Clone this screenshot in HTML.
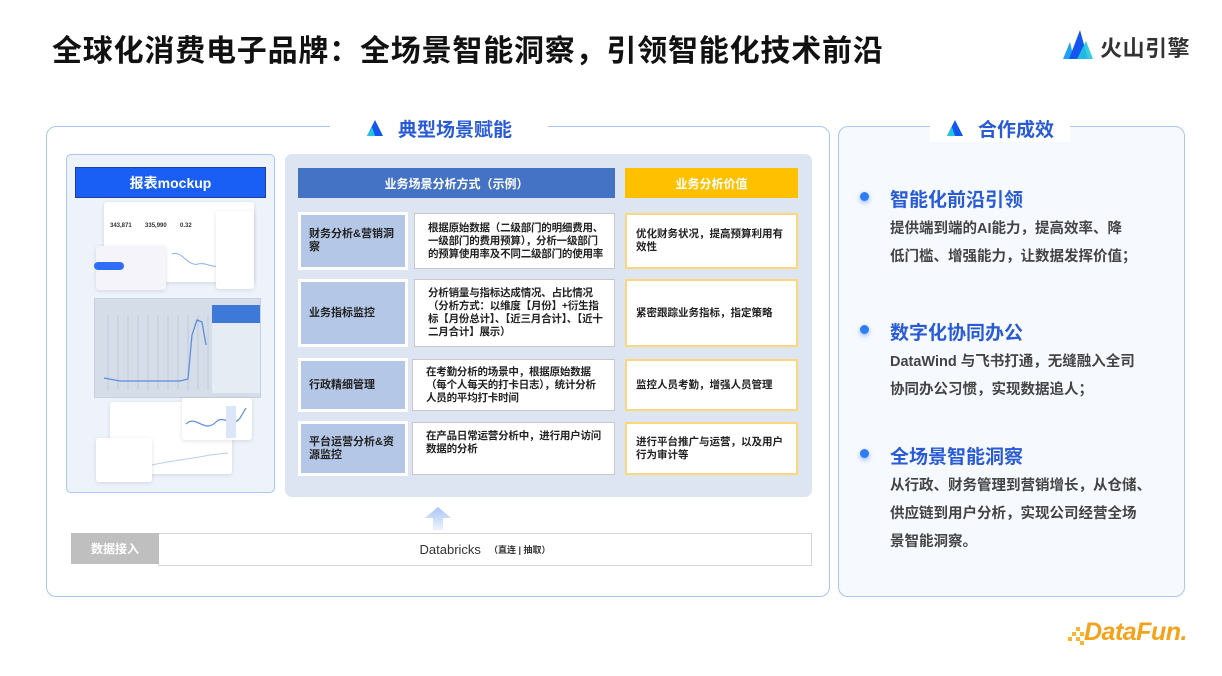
<!DOCTYPE html>
<html><head><meta charset="utf-8"><style>
*{margin:0;padding:0;box-sizing:border-box}
body{width:1222px;height:676px;background:#fff;position:relative;overflow:hidden;font-family:"Liberation Sans","Noto Sans CJK SC",sans-serif}
.a{position:absolute}
.title{left:52px;top:26px;font-size:30px;font-weight:bold;color:#111;letter-spacing:0.8px;white-space:nowrap}
.panel{border:1.5px solid #a9c6ee;border-radius:10px}
.hdr{background:#fff;font-size:19px;font-weight:bold;color:#2a5bd7;display:flex;align-items:center;justify-content:center;gap:14px}
.cell{font-size:10.5px;font-weight:bold;color:#222;line-height:13px;display:flex;align-items:center;padding:0 10px}
.lab{background:#b4c7e7;border:3px solid #fff;left:298px;width:110px;padding:0 8px;font-size:11px}
.desc{background:#fff;border:1px solid #c8c8c8;left:414px;width:201px;padding:0 8px 0 13px;letter-spacing:-0.2px}
.val{background:#fff;border:2px solid #fdd77a;left:625px;width:173px;padding:0 8px 0 9px}
.h3{font-size:19px;font-weight:bold;color:#2a5bd7;left:890px}
.p{font-size:14.5px;color:#444;left:890px;line-height:28px;font-weight:bold}
.dot{width:9px;height:9px;border-radius:50%;background:#2e7cf6;box-shadow:0 2px 5px rgba(46,124,246,.5);left:860px}
.card{background:#fff;border-radius:3px;box-shadow:0 1px 4px rgba(0,0,0,.12)}
</style></head><body>
<div class="a title">全球化消费电子品牌：全场景智能洞察，引领智能化技术前沿</div>
<svg class="a" style="left:1063px;top:28px" width="32" height="32" viewBox="0 0 32 32"><polygon points="0,31 7,14 11,31" fill="#1fa3f5"/><polygon points="6,31 17,2 25,31" fill="#1456f0"/><polygon points="14,31 23,13 30,31" fill="#21c7e0" opacity=".9"/></svg>
<div class="a" style="left:1100px;top:31px;font-size:22px;font-weight:bold;color:#333;letter-spacing:0.5px">火山引擎</div>

<div class="a panel" style="left:46px;top:126px;width:784px;height:471px"></div>
<div class="a hdr" style="left:330px;top:114px;width:218px;height:28px"><svg width="18" height="18" viewBox="0 0 18 18"><polygon points="9,1 17,17 1,17" fill="#1456f0"/><polygon points="1,17 6,8 9,17" fill="#21c7e0"/></svg>典型场景赋能</div>

<div class="a panel" style="left:838px;top:126px;width:347px;height:471px;background:#f6f9fe"></div>
<div class="a hdr" style="left:930px;top:114px;width:140px;height:28px"><svg width="18" height="18" viewBox="0 0 18 18"><polygon points="9,1 17,17 1,17" fill="#1456f0"/><polygon points="1,17 6,8 9,17" fill="#21c7e0"/></svg>合作成效</div>

<!-- mockup -->
<div class="a" style="left:66px;top:154px;width:209px;height:339px;background:#eef3fb;border:1.5px solid #a9c6ee;border-radius:5px"></div>
<div class="a" style="left:75px;top:167px;width:191px;height:31px;background:#1a5ff5;border:1.5px solid #1a3f9e;color:#fff;font-size:14px;font-weight:bold;display:flex;align-items:center;justify-content:center">报表mockup</div>
<div class="a card" style="left:104px;top:202px;width:150px;height:80px"></div>
<div class="a" style="left:110px;top:223px;font-size:6px;color:#333;font-weight:bold">343,871 &nbsp;&nbsp;&nbsp;&nbsp;&nbsp;&nbsp; 335,990 &nbsp;&nbsp;&nbsp;&nbsp;&nbsp;&nbsp; 0.32</div>
<svg class="a" style="left:170px;top:242px" width="50" height="30"><path d="M2,12 C12,8 18,25 28,22 C36,20 42,26 48,24" fill="none" stroke="#8fb0e8" stroke-width="1"/></svg>
<div class="a card" style="left:96px;top:246px;width:70px;height:44px;background:#f5f4fb"></div>
<div class="a" style="left:94px;top:262px;width:30px;height:8px;border-radius:4px;background:#2f6df6"></div>
<div class="a card" style="left:216px;top:211px;width:38px;height:78px"></div>
<div class="a" style="left:94px;top:298px;width:167px;height:100px;background:#d5dde9;border:1px solid #c5d1e2"></div>
<svg class="a" style="left:100px;top:305px" width="160" height="90"><g stroke="#c2ccd9" stroke-width="1">
<line x1="8" y1="10" x2="8" y2="85"/><line x1="18" y1="10" x2="18" y2="85"/><line x1="28" y1="10" x2="28" y2="85"/><line x1="38" y1="10" x2="38" y2="85"/><line x1="48" y1="10" x2="48" y2="85"/><line x1="58" y1="10" x2="58" y2="85"/><line x1="68" y1="10" x2="68" y2="85"/><line x1="78" y1="10" x2="78" y2="85"/><line x1="88" y1="10" x2="88" y2="85"/><line x1="98" y1="10" x2="98" y2="85"/><line x1="108" y1="10" x2="108" y2="85"/></g>
<polyline points="4,73 20,76 50,76 80,76 88,74 92,30 97,15 102,17 106,40" fill="none" stroke="#5b8de0" stroke-width="1.3"/>
<rect x="112" y="0" width="48" height="18" fill="#3e78d9"/><rect x="112" y="18" width="48" height="70" fill="#e6ecf4"/></svg>
<div class="a card" style="left:110px;top:402px;width:122px;height:72px"></div>
<div class="a card" style="left:182px;top:398px;width:70px;height:42px"></div>
<svg class="a" style="left:184px;top:404px" width="66" height="34"><path d="M2,20 C12,10 20,30 32,18 C40,10 48,25 56,14 L62,4" fill="none" stroke="#5b8de0" stroke-width="1.2"/><rect x="42" y="2" width="10" height="32" fill="#dbe6fb"/></svg>
<svg class="a" style="left:150px;top:445px" width="80" height="25"><path d="M2,20 C20,16 40,14 60,10 L78,8" fill="none" stroke="#b9cdf0" stroke-width="1"/></svg>
<div class="a card" style="left:96px;top:438px;width:56px;height:44px"></div>

<!-- center -->
<div class="a" style="left:285px;top:154px;width:527px;height:343px;background:#dee5f2;border-radius:7px"></div>
<div class="a" style="left:298px;top:168px;width:317px;height:30px;background:#4472c4;color:#fff;font-size:12px;font-weight:bold;display:flex;align-items:center;justify-content:center">业务场景分析方式（示例）</div>
<div class="a" style="left:625px;top:168px;width:173px;height:30px;background:#ffc000;color:#fff;font-size:12px;font-weight:bold;display:flex;align-items:center;justify-content:center">业务分析价值</div>

<div class="a cell lab" style="top:212px;height:58px">财务分析&amp;营销洞察</div>
<div class="a cell desc" style="top:213px;height:56px">根据原始数据（二级部门的明细费用、一级部门的费用预算），分析一级部门的预算使用率及不同二级部门的使用率</div>
<div class="a cell val" style="top:213px;height:56px">优化财务状况，提高预算利用有效性</div>

<div class="a cell lab" style="top:279px;height:68px">业务指标监控</div>
<div class="a cell desc" style="top:279px;height:68px">分析销量与指标达成情况、占比情况（分析方式：以维度【月份】+衍生指标【月份总计】、【近三月合计】、【近十二月合计】展示）</div>
<div class="a cell val" style="top:279px;height:68px">紧密跟踪业务指标，指定策略</div>

<div class="a cell lab" style="top:358px;height:54px">行政精细管理</div>
<div class="a cell desc" style="top:359px;height:52px;left:412px;width:203px">在考勤分析的场景中，根据原始数据（每个人每天的打卡日志），统计分析人员的平均打卡时间</div>
<div class="a cell val" style="top:359px;height:52px">监控人员考勤，增强人员管理</div>

<div class="a cell lab" style="top:421px;height:55px">平台运营分析&amp;资源监控</div>
<div class="a cell desc" style="top:422px;height:53px;left:412px;width:203px;align-items:flex-start;padding-top:7px">在产品日常运营分析中，进行用户访问数据的分析</div>
<div class="a cell val" style="top:422px;height:53px">进行平台推广与运营，以及用户行为审计等</div>

<svg class="a" style="left:424px;top:506px" width="28" height="24"><defs><linearGradient id="g" x1="0" y1="0" x2="0" y2="1"><stop offset="0" stop-color="#a9c4f5"/><stop offset="1" stop-color="#eef3fd"/></linearGradient></defs><polygon points="14,1 27,12 19,12 19,24 9,24 9,12 1,12" fill="url(#g)"/></svg>

<div class="a" style="left:158px;top:533px;width:654px;height:33px;border:1px solid #d6d6d6;background:#fff;font-size:13px;color:#333;display:flex;align-items:center;justify-content:center">Databricks <span style="font-size:9px;margin-left:8px;font-weight:bold">（直连 | 抽取）</span></div>
<div class="a" style="left:71px;top:533px;width:88px;height:31px;background:#bfbfbf;color:#fff;font-size:12px;font-weight:bold;display:flex;align-items:center;justify-content:center">数据接入</div>

<!-- right -->
<div class="a dot" style="top:192px"></div>
<div class="a h3" style="top:185px">智能化前沿引领</div>
<div class="a p" style="top:215px">提供端到端的AI能力，提高效率、降<br>低门槛、增强能力，让数据发挥价值；</div>
<div class="a dot" style="top:325px"></div>
<div class="a h3" style="top:318px">数字化协同办公</div>
<div class="a p" style="top:348px">DataWind 与飞书打通，无缝融入全司<br>协同办公习惯，实现数据追人；</div>
<div class="a dot" style="top:449px"></div>
<div class="a h3" style="top:442px">全场景智能洞察</div>
<div class="a p" style="top:472px">从行政、财务管理到营销增长，从仓储、<br>供应链到用户分析，实现公司经营全场<br>景智能洞察。</div>

<svg class="a" style="left:1068px;top:627px" width="16" height="20"><g fill="#f7b733"><rect x="8" y="0" width="4" height="4"/><rect x="12" y="5" width="4" height="4"/><rect x="4" y="5" width="4" height="4"/><rect x="8" y="10" width="4" height="4"/><rect x="0" y="10" width="4" height="4"/><rect x="12" y="14" width="4" height="4"/></g></svg>
<div class="a" style="left:1084px;top:618px;color:#f5a21b;font-size:25px;font-weight:bold;font-style:italic;letter-spacing:-0.5px">DataFun.</div>
</body></html>
